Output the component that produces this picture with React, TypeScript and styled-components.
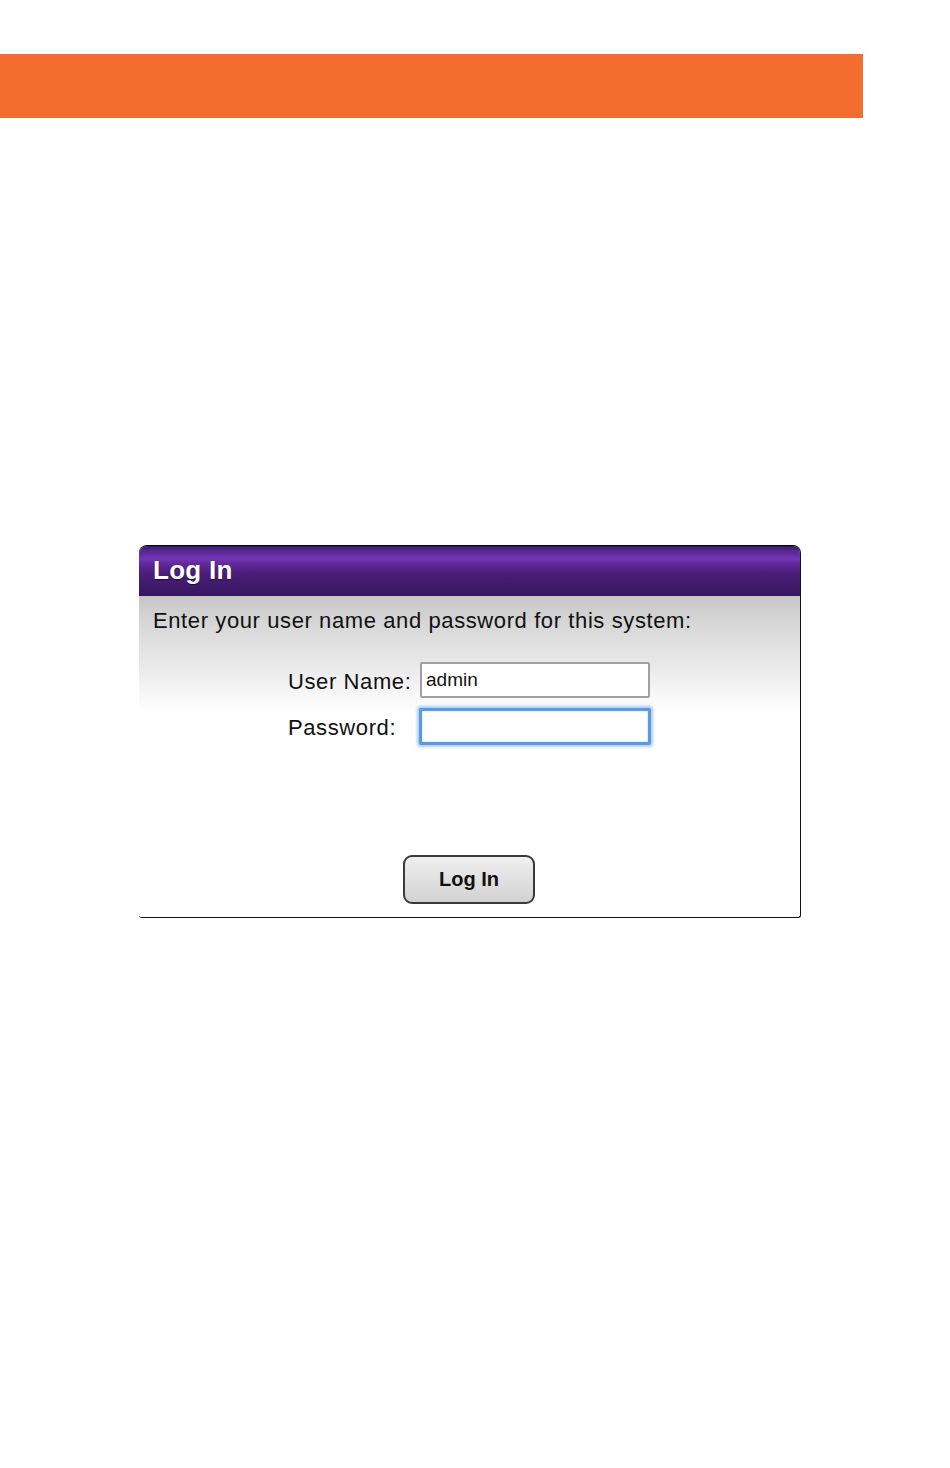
import React from "react";
import styled, { createGlobalStyle } from "styled-components";

const Global = createGlobalStyle`
  html, body { margin: 0; padding: 0; background: #ffffff; }
  body { font-family: "Liberation Sans", Arial, Helvetica, sans-serif; }
`;

const Page = styled.div`
  width: 950px;
  min-height: 1468px;
  padding-top: 54px;
  box-sizing: border-box;
  display: flex;
  flex-direction: column;
`;

const OrangeBar = styled.div`
  width: 863px;
  height: 64px;
  background: #f26d2e;
`;

const Panel = styled.div`
  margin-top: 427px;
  margin-left: 139px;
  width: 662px;
  height: 373px;
  box-sizing: border-box;
  display: flex;
  flex-direction: column;
  border-top: 1px solid #000;
  border-right: 1px solid #111;
  border-bottom: 1px solid #111;
  border-radius: 8px 8px 3px 3px;
  overflow: hidden;
  background: linear-gradient(to bottom, #c7c7c7 50px, #d8d8d8 80px, #ececec 125px, #fafafa 155px, #ffffff 168px, #ffffff 100%);
`;

const Header = styled.div`
  height: 50px;
  flex: none;
  display: flex;
  align-items: center;
  padding-left: 14px;
  background: linear-gradient(
    to bottom,
    #3a1a63 0px,
    #5a2a96 6px,
    #7433b6 13px,
    #5a2590 20px,
    #4a1d78 28px,
    #3f1a6a 40px,
    #371660 50px
  );
`;

const Title = styled.h1`
  margin: 0;
  margin-top: -2px;
  font-family: "Liberation Sans", Arial, Helvetica, sans-serif;
  font-weight: bold;
  font-size: 26px;
  letter-spacing: 0.3px;
  color: #ffffff;
  text-shadow: 0 1px 1px rgba(0, 0, 0, 0.6);
`;

const Body = styled.div`
  flex: 1;
  display: flex;
  flex-direction: column;
  padding: 12px 14px 13px 14px;
`;

const Instruction = styled.p`
  margin: 0;
  font-size: 22px;
  letter-spacing: 0.6px;
  line-height: 26px;
  color: #111;
`;

const Form = styled.div`
  margin-top: 28px;
  margin-left: 135px;
  display: grid;
  grid-template-columns: 132px 232px;
  grid-auto-rows: 36px;
  row-gap: 10px;
  align-items: center;
`;

const Label = styled.label`
  font-size: 22px;
  letter-spacing: 0.6px;
  color: #111;
  white-space: nowrap;
  transform: translateY(2px);
`;

const TextInput = styled.input<{ $focused?: boolean }>`
  box-sizing: border-box;
  width: ${(p) => (p.$focused ? "232px" : "230px")};
  margin-left: ${(p) => (p.$focused ? "-1px" : "0")};
  height: ${(p) => (p.$focused ? "37px" : "36px")};
  padding: 0 4px;
  font-family: "Liberation Sans", Arial, Helvetica, sans-serif;
  font-size: 19px;
  color: #111;
  background: #fff;
  border: ${(p) => (p.$focused ? "3px solid #5b9be6" : "2px solid #a0a0a0")};
  border-radius: 2px;
  box-shadow: ${(p) => (p.$focused ? "0 0 3px 2px rgba(100, 160, 240, 0.55), inset 0 0 2px rgba(90,150,230,0.5)" : "none")};
  outline: none;
`;

const ButtonRow = styled.div`
  margin-top: auto;
  display: flex;
  justify-content: center;
  padding-right: 1px;
`;

const Button = styled.button`
  width: 132px;
  height: 49px;
  box-sizing: border-box;
  border: 2px solid #3a3a3a;
  border-radius: 9px;
  background: linear-gradient(to bottom, #f0f0f0 0%, #e2e2e2 45%, #d2d2d2 100%);
  font-family: "Liberation Sans", Arial, Helvetica, sans-serif;
  font-weight: bold;
  font-size: 20px;
  color: #111;
  cursor: pointer;
`;

export default function App() {
  return (
    <>
      <Global />
      <Page>
        <OrangeBar />
        <Panel>
          <Header>
            <Title>Log In</Title>
          </Header>
          <Body>
            <Instruction>Enter your user name and password for this system:</Instruction>
            <Form>
              <Label htmlFor="user">User Name:</Label>
              <TextInput id="user" type="text" defaultValue="admin" />
              <Label htmlFor="pass">Password:</Label>
              <TextInput id="pass" type="password" $focused />
            </Form>
            <ButtonRow>
              <Button type="button">Log In</Button>
            </ButtonRow>
          </Body>
        </Panel>
      </Page>
    </>
  );
}
